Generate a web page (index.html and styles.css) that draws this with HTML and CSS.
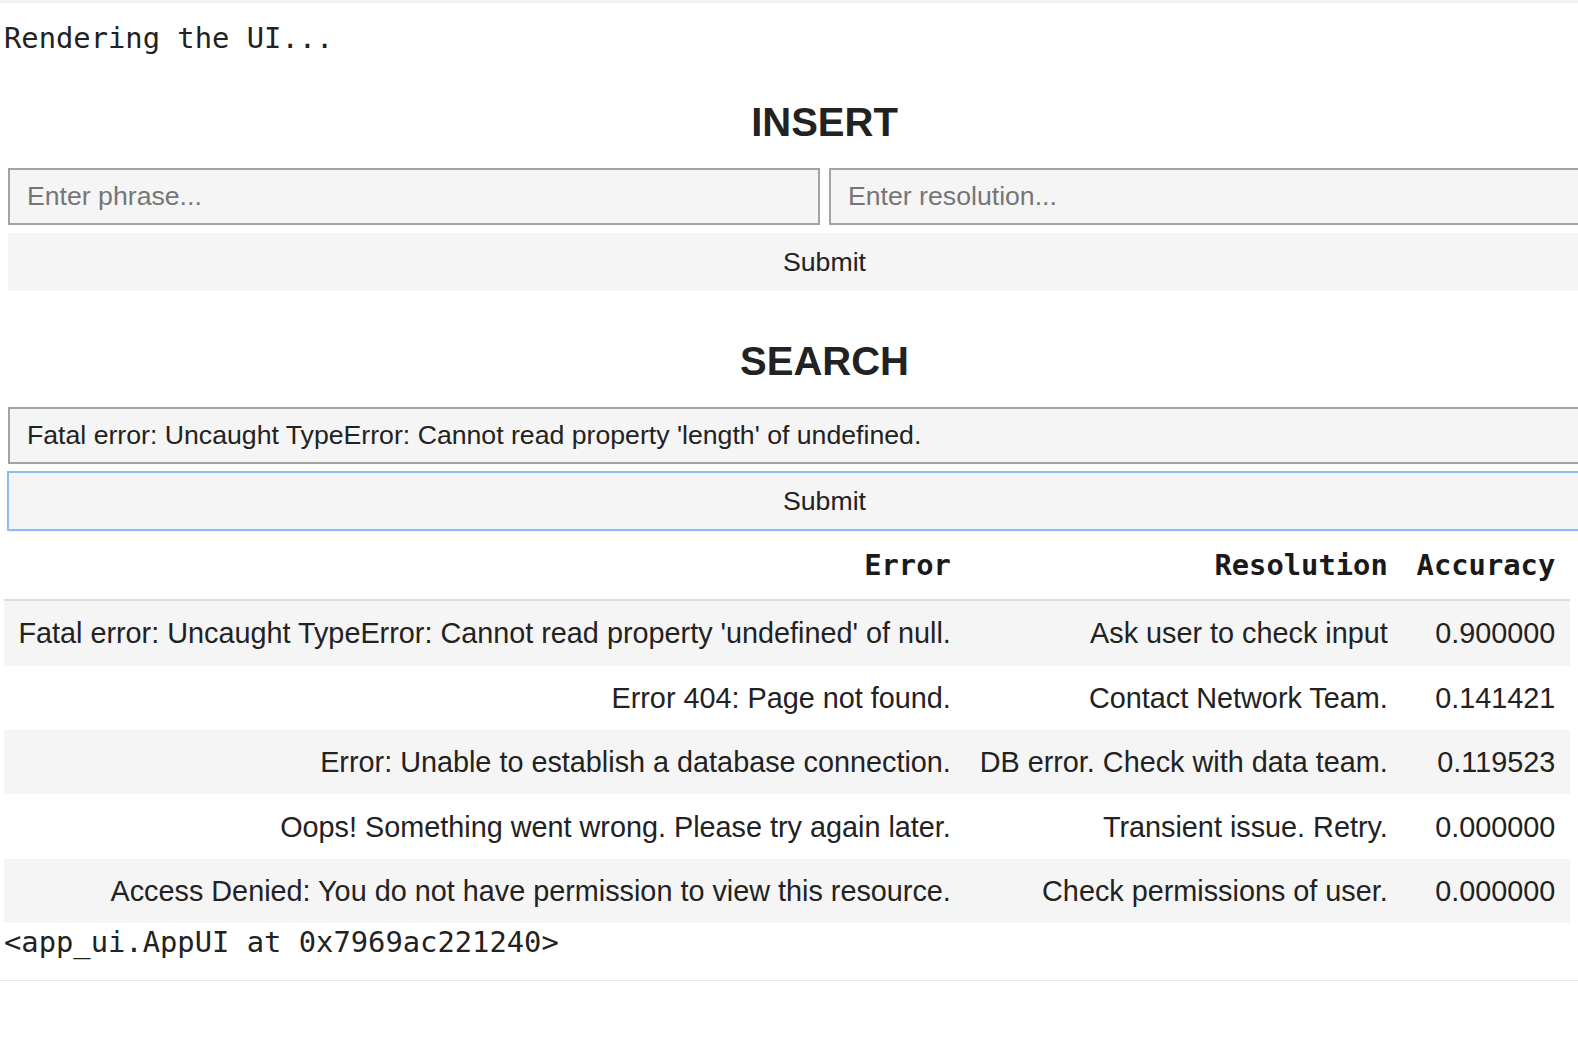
FILE: index.html
```html
<!DOCTYPE html>
<html lang="en">
<head>
<meta charset="utf-8">
<title>App UI</title>
<link rel="stylesheet" href="styles.css">
</head>
<body>
<div class="topbar"></div>
<div class="output">
  <pre class="log">Rendering the UI...</pre>
  <div class="panel">
    <h2 class="section-title title-insert">INSERT</h2>
    <div class="input-row">
      <input class="field" type="text" placeholder="Enter phrase...">
      <input class="field" type="text" placeholder="Enter resolution...">
    </div>
    <button class="btn" type="button">Submit</button>
    <h2 class="section-title title-search">SEARCH</h2>
    <input class="field field-full" type="text" value="Fatal error: Uncaught TypeError: Cannot read property 'length' of undefined.">
    <button class="btn btn-focused" type="button">Submit</button>
  </div>
  <table class="results">
    <thead>
      <tr><th>Error</th><th>Resolution</th><th>Accuracy</th></tr>
    </thead>
    <tbody>
      <tr><td>Fatal error: Uncaught TypeError: Cannot read property 'undefined' of null.</td><td>Ask user to check input</td><td>0.900000</td></tr>
      <tr><td>Error 404: Page not found.</td><td>Contact Network Team.</td><td>0.141421</td></tr>
      <tr><td>Error: Unable to establish a database connection.</td><td>DB error. Check with data team.</td><td>0.119523</td></tr>
      <tr><td>Oops! Something went wrong. Please try again later.</td><td>Transient issue. Retry.</td><td>0.000000</td></tr>
      <tr><td>Access Denied: You do not have permission to view this resource.</td><td>Check permissions of user.</td><td>0.000000</td></tr>
    </tbody>
  </table>
  <pre class="log log-last">&lt;app_ui.AppUI at 0x7969ac221240&gt;</pre>
</div>
</body>
</html>
```
FILE: styles.css
```css
html, body {
  margin: 0;
  padding: 0;
  background: #ffffff;
  overflow: hidden;
}
body {
  font-family: "Liberation Sans", Arial, Helvetica, sans-serif;
  color: #222222;
}
.topbar {
  height: 3px;
  background: #f3f3f3;
}
.output {
  padding: 19px 0 20px 4px;
  border-bottom: 1px solid #e8e8e8;
  box-shadow: 0 1px 3px rgba(0, 0, 0, 0.12);
  background: #ffffff;
}
.log {
  font-family: "DejaVu Sans Mono", "Liberation Mono", monospace;
  font-size: 28.8px;
  line-height: 33.5px;
  margin: 0;
  color: #222222;
  white-space: pre;
}
.log-last {
  margin-top: 3px;
}
.panel {
  width: 1633px;
  margin-left: 4px;
}
.section-title {
  font-size: 40px;
  font-weight: bold;
  line-height: 46px;
  text-align: center;
  margin: 0 0 23px;
  color: #222222;
}
.title-insert {
  margin-top: 43.5px;
}
.title-search {
  margin-top: 47.3px;
}
.input-row {
  display: flex;
  gap: 9px;
}
.field {
  flex: 1;
  box-sizing: border-box;
  height: 57px;
  border: 2px solid #a3a3a3;
  background: #f5f5f5;
  padding: 0 17px;
  font-family: "Liberation Sans", Arial, Helvetica, sans-serif;
  font-size: 26.67px;
  color: #222222;
  margin: 0;
  outline: none;
}
.field::placeholder {
  color: #767676;
}
.field-full {
  display: block;
  width: 100%;
}
.btn {
  display: block;
  box-sizing: border-box;
  width: 100%;
  height: 58px;
  margin: 8px 0 0;
  border: none;
  background: #f5f5f5;
  font-family: "Liberation Sans", Arial, Helvetica, sans-serif;
  font-size: 26.67px;
  color: #222222;
  padding: 0;
}
.btn-focused {
  outline: 2px solid #8dbcf1;
  outline-offset: -1px;
  box-shadow: 0 2px 2px rgba(0, 0, 0, 0.06);
}
.results {
  border-collapse: collapse;
  margin-top: 2px;
  font-size: 28.8px;
  color: #222222;
}
.results th,
.results td {
  padding: 15.2px 14.4px 13.6px;
  line-height: 35.6px;
  text-align: right;
  white-space: nowrap;
}
.results th {
  font-family: "DejaVu Sans Mono", "Liberation Mono", monospace;
  font-weight: bold;
  padding-top: 15.25px;
  padding-bottom: 16.15px;
  border-bottom: 2px solid #dcdcdc;
  color: #1a1a1a;
}
.results tbody tr:nth-child(odd) {
  background: #f5f5f5;
}
```
